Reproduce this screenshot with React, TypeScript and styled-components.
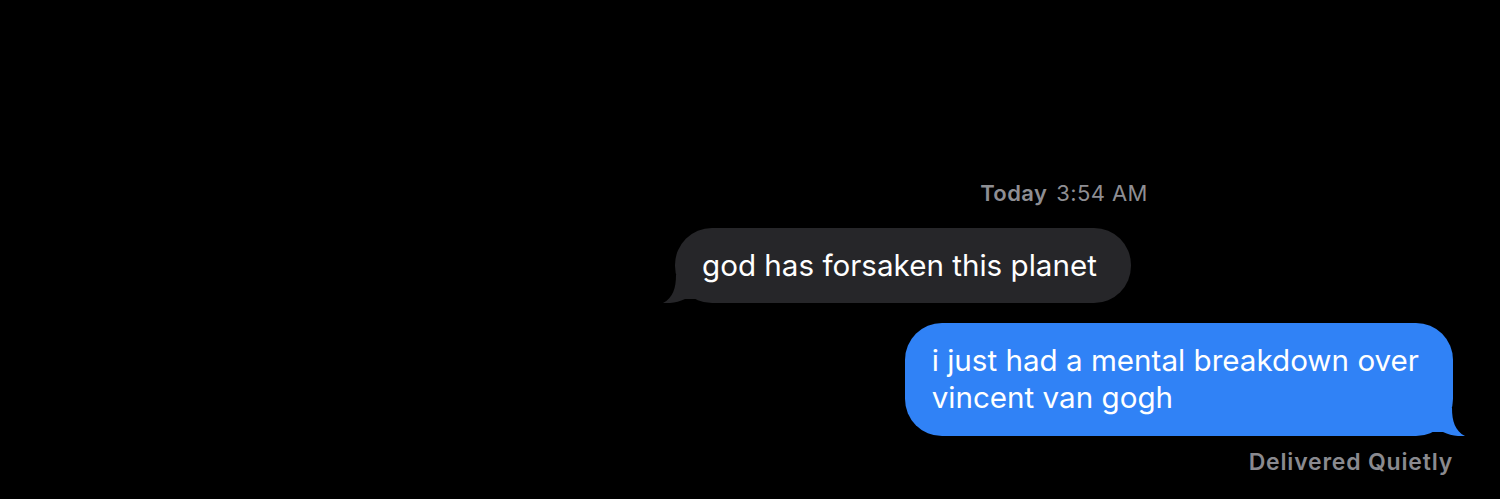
import React from "react";
import styled, { createGlobalStyle } from "styled-components";

const GlobalStyle = createGlobalStyle`
  html, body {
    margin: 0;
    padding: 0;
    background: #000;
  }
  body {
    font-family: Inter, "Noto Sans", "Liberation Sans", sans-serif;
    -webkit-font-smoothing: antialiased;
  }
`;

const Screen = styled.div`
  width: 1500px;
  height: 499px;
  background: #000;
  display: flex;
  justify-content: flex-end;
  padding-right: 23px;
  box-sizing: border-box;
  overflow: hidden;
`;

const Thread = styled.div`
  width: 826px;
  box-sizing: border-box;
  padding: 180px 24px 0;
  display: flex;
  flex-direction: column;
`;

const Stamp = styled.div`
  text-align: center;
  font-size: 22px;
  line-height: 27px;
  color: #8e8e93;
  font-weight: 400;
  letter-spacing: 0.4px;
`;

const StampDay = styled.span`
  font-weight: 600;
  margin-right: 9px;
`;

const Row = styled.div<{ $out?: boolean }>`
  display: flex;
  justify-content: ${(p) => (p.$out ? "flex-end" : "flex-start")};
  margin-top: ${(p) => (p.$out ? "20px" : "21px")};
`;

const Bubble = styled.div<{ $out?: boolean }>`
  position: relative;
  background: ${(p) => (p.$out ? "#3082f6" : "#262629")};
  color: #fff;
  font-size: 29.6px;
  line-height: 37px;
  padding: 19px 34px ${(p) => (p.$out ? "20px" : "19px")} 27px;
  border-radius: 37px;
  white-space: nowrap;
  box-sizing: border-box;
`;

const BubbleText = styled.span`
  position: relative;
  z-index: 1;
`;

const Tail = styled.svg<{ $out?: boolean }>`
  position: absolute;
  bottom: 0;
  width: 40px;
  height: 28px;
  ${(p) =>
    p.$out
      ? "right: -12px; transform: scaleX(-1);"
      : "left: -12px;"}
`;

const Footer = styled.div`
  text-align: right;
  font-size: 23px;
  line-height: 27px;
  font-weight: 600;
  color: #8a8a8f;
  margin-top: 13px;
  letter-spacing: 0.8px;
`;

function BubbleTail({ out, color }: { out?: boolean; color: string }) {
  return (
    <Tail $out={out} viewBox="0 0 40 28">
      <path
        d="M13 0 C13 13 10 23 0 28 C8 28.6 15 27.2 22 24 L40 24 L40 0 Z"
        fill={color}
      />
    </Tail>
  );
}

export default function App() {
  return (
    <>
      <GlobalStyle />
      <Screen>
        <Thread>
          <Stamp>
            <StampDay>Today</StampDay>3:54 AM
          </Stamp>
          <Row>
            <Bubble>
              <BubbleTail color="#262629" />
              <BubbleText>god has forsaken this planet</BubbleText>
            </Bubble>
          </Row>
          <Row $out>
            <Bubble $out>
              <BubbleTail out color="#3082f6" />
              <BubbleText>
                i just had a mental breakdown over
                <br />
                vincent van gogh
              </BubbleText>
            </Bubble>
          </Row>
          <Footer>Delivered Quietly</Footer>
        </Thread>
      </Screen>
    </>
  );
}
